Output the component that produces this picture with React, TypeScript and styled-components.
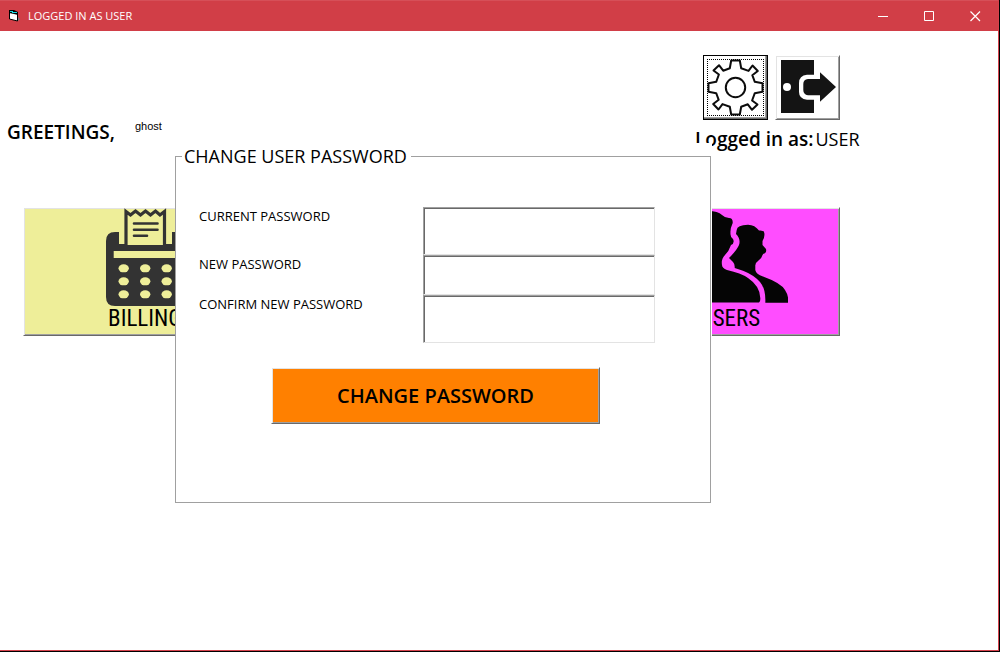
import React from "react";
import styled, { createGlobalStyle, css } from "styled-components";

const uiFont = `"Open Sans", "Noto Sans", sans-serif`;

const GlobalStyle = createGlobalStyle`
  *, *::before, *::after { box-sizing: border-box; }
  body { margin: 0; background: #000; color: #000; font-family: ${uiFont}; }
  button, input { font: inherit; color: inherit; border-radius: 0; }
`;

const bevel = css`
  border: 1px solid;
  border-color: #fff #696969 #696969 #fff;
  box-shadow: inset 1px 1px #e3e3e3, inset -1px -1px #a0a0a0;
`;

const Window = styled.div`
  display: flex;
  flex-direction: column;
  min-height: calc(100vh - 1px);
  margin: 0 1px 1px 0;
  border: solid #d5424c;
  border-width: 0 1px 1px 0;
  background: #fff;
`;

const TitleBar = styled.header`
  display: flex;
  align-items: center;
  height: 31px;
  padding-left: 8px;
  border-top: 1px solid #d64f58;
  background: #d13e47;
  color: #fff;
`;

const Title = styled.h1`
  flex: 1;
  margin: 0 0 0 8px;
  font-size: 11px;
  line-height: 16px;
  font-weight: 400;
`;

const CaptionButton = styled.button`
  display: grid;
  place-items: center;
  width: 46px;
  height: 30px;
  padding: 0;
  border: 0;
  background: transparent;
`;

const Desktop = styled.main`
  position: relative;
  flex: 1;
  padding-top: 24px;
`;

const TopRow = styled.section`
  display: flex;
  justify-content: space-between;
  align-items: flex-start;
  padding: 0 140px 0 7px;
`;

const Greeting = styled.div`
  display: flex;
  align-items: flex-start;
  gap: 20px;
  padding-top: 64px;
`;

const Strong = styled.strong`
  font-size: 19px;
  line-height: 26px;
  font-weight: 600;
  white-space: nowrap;
`;

const UserName = styled.span`
  font-family: "Liberation Sans", sans-serif;
  font-size: 11px;
  line-height: 14px;
`;

const Account = styled.div`
  display: flex;
  flex-direction: column;
  gap: 6px;
  width: 163px;
`;

const Tools = styled.div`
  display: flex;
  gap: 7px;
  padding-left: 8px;
`;

const ToolButton = styled.button<{ $focused?: boolean }>`
  ${bevel}
  display: grid;
  place-items: center;
  width: 65px;
  height: 65px;
  padding: 0;
  background: #fff;
  ${(p) =>
    p.$focused &&
    css`
      border-color: #000;
      box-shadow: inset -1px -1px #696969, inset -2px -2px #a0a0a0;
      outline: 1px dotted #000;
      outline-offset: -5px;
    `}
`;

const Status = styled.p`
  display: flex;
  gap: 2px;
  margin: 0;
  font-size: 18px;
  line-height: 26px;
  font-weight: 500;
  white-space: nowrap;
`;

const Tiles = styled.nav`
  display: flex;
  justify-content: space-between;
  padding: 55px 158px 0 23px;
`;

const Tile = styled.button<{ $width: number; $color: string }>`
  ${bevel}
  display: flex;
  flex-direction: column;
  align-items: center;
  width: ${(p) => p.$width}px;
  height: 129px;
  padding: 0;
  background: ${(p) => p.$color};
  font-family: "Roboto Condensed", Roboto, sans-serif;
  font-size: 23px;
  line-height: 26px;
`;

const Dialog = styled.form`
  position: absolute;
  top: 112px;
  left: 175px;
  width: 537px;
  padding-right: 1px;
  background: #fff;
`;

const Group = styled.fieldset`
  margin: 0;
  min-width: 0;
  padding: 0 6px 78px;
  border: 1px solid #a0a0a0;
`;

const Legend = styled.legend`
  padding: 0 4px 0 2px;
  font-size: 18px;
  line-height: 26px;
  font-weight: 500;
`;

const Fields = styled.div`
  display: grid;
  grid-template-columns: 224px 1fr;
  grid-template-rows: 48px 40px 48px;
  padding: 38px 49px 0 17px;
`;

const Label = styled.label`
  font-size: 13px;
  line-height: 18px;
`;

const PasswordInput = styled.input`
  min-width: 0;
  width: 100%;
  height: 100%;
  padding: 0 4px;
  border: 1px solid;
  border-color: #a0a0a0 #e3e3e3 #e3e3e3 #a0a0a0;
  box-shadow: inset 1px 1px #696969;
  background: #fff;
  outline: 0;
`;

const SubmitButton = styled.button`
  ${bevel}
  display: block;
  width: 329px;
  height: 57px;
  margin: 24px 0 0 89px;
  padding: 0;
  background: #ff8000;
  font-size: 20px;
  line-height: 26px;
  font-weight: 600;
`;

const FormIcon = () => (
  <svg width="12" height="12" viewBox="0 0 12 12" aria-hidden="true">
    <path d="M10 7l2 2-2 2z" fill="#777" />
    <path d="M1.500 1.500L9.500 3.500V11L1.500 9Z" fill="#fff" stroke="#000" />
    <path d="M1 0H6L10 2V5L6 4L1 3Z" fill="#000" />
    <path d="M2 1.500H5M4 2.500H9" stroke="#19d8e0" />
  </svg>
);

const GearIcon = () => {
  const quarter = [
    [-4.3, -27], [4.3, -27], [5.7, -19.3], [13, -16.6], [17, -22], [22.3, -16.5], [16.8, -12.3], [19.3, -5.7],
  ];
  const points = [0, 1, 2, 3].flatMap((turn) =>
    quarter.map(([x, y]) => {
      const [a, b] = [[x, y], [-y, x], [-x, -y], [y, -x]][turn];
      return `${a},${b}`;
    })
  );
  return (
    <svg width="57" height="57" viewBox="-28.500 -28.500 57 57" fill="none" stroke="#0c0c0c" strokeWidth="2" aria-hidden="true">
      <polygon points={points.join(" ")} strokeLinejoin="round" />
      <circle r="9.700" />
    </svg>
  );
};

const ExitIcon = () => (
  <svg width="63" height="63" viewBox="0 0 63 63" aria-hidden="true">
    <path d="M5 4H38V57H5Z" fill="#141414" />
    <circle cx="11" cy="31" r="4" fill="#fff" />
    <path d="M39 18.700H31Q23 19.500 23 27V36Q23 43 31 43.700H39Z" fill="#fff" />
    <path d="M44 16.300L60 31L44 45.700V39.300H32Q27.300 38.500 27.300 34V28Q27.300 23.500 32 23H44Z" fill="#141414" />
  </svg>
);

const BillingIcon = () => (
  <svg width="79" height="98" viewBox="0 0 79 98" aria-hidden="true">
    <path d="M9 24H13V36H66V24H70Q79 24 79 33V89Q79 98 70 98H9Q0 98 0 89V33Q0 24 9 24Z" fill="#333" />
    <path d="M20 37V3.500L24.500 7L29.500 3L34.500 7L39.500 3L44.500 7L49.500 3L54 7L58.500 3.500V37" fill="#eeee99" stroke="#333" strokeWidth="3.200" />
    <path d="M28 15.500H51.500M28 21.700H51.500M28 27.700H41" stroke="#333" strokeWidth="2.600" strokeLinecap="round" />
    <path d="M7.700 43H71.500V50H7.700Z" fill="#eeee99" />
    {[60.3, 73.3, 86.3].map((y) =>
      [17.7, 39.2, 60.7].map((x) => <ellipse key={`${x}-${y}`} cx={x} cy={y} rx="5.200" ry="4" fill="#eeee99" />)
    )}
  </svg>
);

const UsersIcon = () => (
  <svg width="116" height="98" viewBox="0 0 116 98" aria-hidden="true">
    <path d="M2 94.500Q-1 82 10 76Q20 70 30 65Q35 61 31 53Q24 45 21 37Q17 31 21 27Q17 5 36 3Q46 3 50 7Q53 10 57 10Q61 10 60.700 15Q58 21 58.500 25Q58 29 61 31Q63 35 59 37Q57 43 53 47Q49 51 50 57Q50 60 55 62Q69 65 76 70Q88 78 88.300 90Q88.500 94 87 94.500Z" fill="#050505" />
    <path d="M64.700 22Q65 17 76 16.700Q83 17 87 22.500Q92 22 92.300 25Q93 29 90.500 33V37L94 41Q95 45 91 46Q90 50 86 53Q83 55 83.300 58V62Q84 66 91 68.500Q109 75 113 82Q117 88 116 94.700H93.300Q94 81 88 74Q82 67 71 62.700L62.700 60Q63 56 61 54L57 50Q65 42 67 37Q69 31 64 26Z" fill="#050505" />
  </svg>
);

export default function App() {
  return (
    <>
      <GlobalStyle />
      <Window>
        <TitleBar>
          <FormIcon />
          <Title>LOGGED IN AS USER</Title>
          <CaptionButton aria-label="Minimize">
            <svg width="11" height="11"><path d="M0 5.500H10" stroke="#fff" /></svg>
          </CaptionButton>
          <CaptionButton aria-label="Maximize">
            <svg width="11" height="11"><path d="M.5 .5H9.500V9.500H.5Z" fill="none" stroke="#fff" /></svg>
          </CaptionButton>
          <CaptionButton aria-label="Close">
            <svg width="11" height="11"><path d="M.5 .5L10 10M10 .5L.5 10" stroke="#fff" strokeWidth="1.200" /></svg>
          </CaptionButton>
        </TitleBar>
        <Desktop>
          <TopRow>
            <Greeting>
              <Strong>GREETINGS,</Strong>
              <UserName>ghost</UserName>
            </Greeting>
            <Account>
              <Tools>
                <ToolButton $focused aria-label="Settings"><GearIcon /></ToolButton>
                <ToolButton aria-label="Log out"><ExitIcon /></ToolButton>
              </Tools>
              <Status><Strong>Logged in as:</Strong>USER</Status>
            </Account>
          </TopRow>
          <Tiles>
            <Tile $width={244} $color="#eeee99"><BillingIcon />BILLING</Tile>
            <Tile $width={220} $color="#ff4dff"><UsersIcon />USERS</Tile>
          </Tiles>
          <Dialog onSubmit={(e: React.FormEvent) => e.preventDefault()}>
            <Group>
              <Legend>CHANGE USER PASSWORD</Legend>
              <Fields>
                <Label htmlFor="current">CURRENT PASSWORD</Label>
                <PasswordInput id="current" type="password" />
                <Label htmlFor="next">NEW PASSWORD</Label>
                <PasswordInput id="next" type="password" />
                <Label htmlFor="confirm">CONFIRM NEW PASSWORD</Label>
                <PasswordInput id="confirm" type="password" />
              </Fields>
              <SubmitButton type="submit">CHANGE PASSWORD</SubmitButton>
            </Group>
          </Dialog>
        </Desktop>
      </Window>
    </>
  );
}
